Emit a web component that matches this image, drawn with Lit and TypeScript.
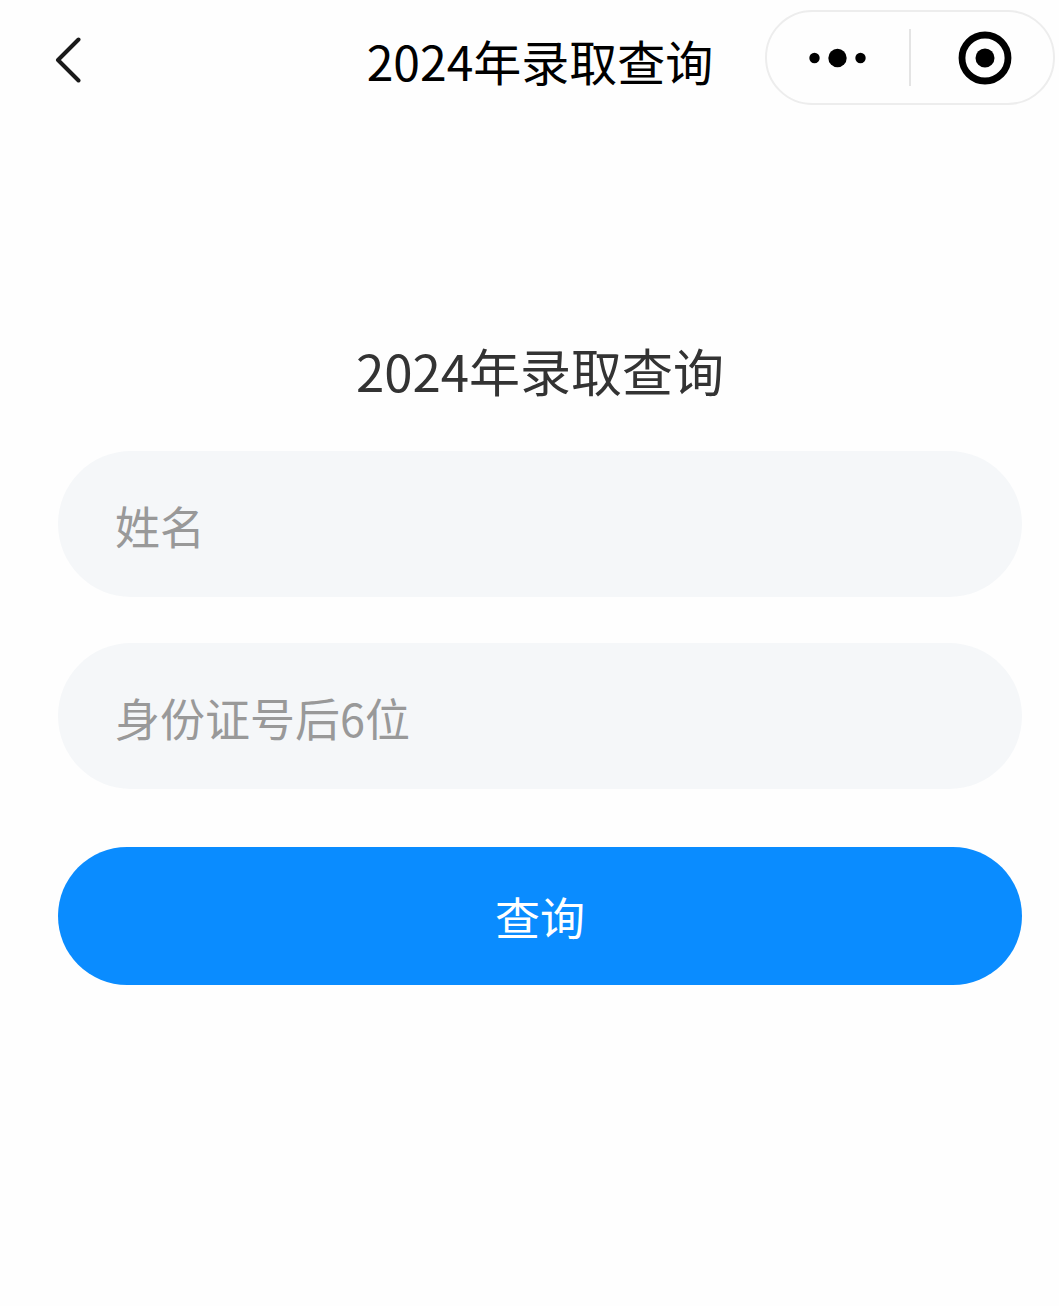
import { LitElement, html, css } from "lit";
import { customElement, state } from "lit/decorators.js";

@customElement("nav-header")
class NavHeader extends LitElement {
  static styles = css`
    :host {
      display: block;
    }
    .bar {
      display: grid;
      grid-template-columns: 1fr auto 1fr;
      align-items: center;
      padding: 10px 4px 0 25px;
    }
    .title {
      margin: 0;
      padding-top: 4px;
      font-size: 48px;
      line-height: 72px;
      font-weight: 400;
      color: #000;
      white-space: nowrap;
    }
    button {
      appearance: none;
      margin: 0;
      padding: 0;
      border: 0;
      background: none;
      color: inherit;
      cursor: pointer;
    }
    svg {
      display: block;
    }
    .back {
      justify-self: start;
      padding: 4px 28px 0;
      color: #1a1a1a;
    }
    .capsule {
      justify-self: end;
      display: flex;
      align-items: center;
      box-sizing: border-box;
      height: 95px;
      border: 2px solid #ededed;
      border-radius: 48px;
      color: #000;
    }
    .capsule button {
      display: flex;
      align-items: center;
      justify-content: center;
      width: 142px;
      height: 91px;
    }
    .capsule .close {
      padding-left: 6px;
      box-sizing: border-box;
    }
    .divider {
      width: 2px;
      height: 57px;
      background: #e4e4e4;
    }
  `;

  render() {
    return html`
      <header class="bar">
        <button class="back" type="button" aria-label="返回">
          <svg width="28" height="48" viewBox="0 0 28 48" fill="none" stroke="currentColor" stroke-width="4" stroke-linecap="round" stroke-linejoin="round">
            <path d="M25.500 3.500L5 24L25.500 44.500" />
          </svg>
        </button>
        <h1 class="title">2024年录取查询</h1>
        <div class="capsule">
          <button type="button" aria-label="更多">
            <svg width="58" height="20" viewBox="0 0 58 20" fill="currentColor">
              <circle cx="5.500" cy="10" r="5.200" />
              <circle cx="28.500" cy="10" r="9.200" />
              <circle cx="51.500" cy="10" r="5.200" />
            </svg>
          </button>
          <span class="divider"></span>
          <button class="close" type="button" aria-label="关闭">
            <svg width="54" height="54" viewBox="0 0 54 54">
              <circle cx="27" cy="27" r="23" fill="none" stroke="currentColor" stroke-width="6.800" />
              <circle cx="27" cy="27" r="9.500" fill="currentColor" />
            </svg>
          </button>
        </div>
      </header>
    `;
  }
}

@customElement("query-form")
class QueryForm extends LitElement {
  @state() private name = "";
  @state() private idTail = "";

  static styles = css`
    :host {
      display: block;
    }
    .form {
      display: flex;
      flex-direction: column;
      padding: 226px 37px 48px 58px;
    }
    .heading {
      margin: 0 0 42px;
      font-size: 51px;
      line-height: 78px;
      font-weight: 400;
      text-align: center;
      color: #333;
    }
    .fields {
      display: flex;
      flex-direction: column;
      gap: 46px;
    }
    .field {
      display: block;
    }
    input,
    .submit {
      display: block;
      box-sizing: border-box;
      width: 100%;
      margin: 0;
      border: 0;
      border-radius: 73px;
      font: inherit;
      font-size: 45px;
      line-height: 66px;
    }
    input {
      padding: 42px 57px 38px;
      background: #f5f7f9;
      color: #333;
      outline: none;
    }
    input::placeholder {
      color: #999;
      opacity: 1;
    }
    .submit {
      margin-top: 58px;
      padding: 37px 57px 35px;
      background: #0a8cff;
      color: #fff;
      cursor: pointer;
    }
  `;

  render() {
    return html`
      <form class="form" @submit=${(e: Event) => e.preventDefault()}>
        <h2 class="heading">2024年录取查询</h2>
        <div class="fields">
          <label class="field">
            <input
              type="text"
              name="name"
              aria-label="姓名"
              placeholder="姓名"
              .value=${this.name}
              @input=${(e: Event) => (this.name = (e.target as HTMLInputElement).value)}
            />
          </label>
          <label class="field">
            <input
              type="text"
              name="idTail"
              maxlength="6"
              aria-label="身份证号后6位"
              placeholder="身份证号后6位"
              .value=${this.idTail}
              @input=${(e: Event) => (this.idTail = (e.target as HTMLInputElement).value)}
            />
          </label>
        </div>
        <button class="submit" type="submit">查询</button>
      </form>
    `;
  }
}

@customElement("app-root")
class AppRoot extends LitElement {
  static styles = css`
    :host {
      display: block;
      min-height: 100vh;
      background: #fefefe;
      font-family: "Noto Sans CJK SC", "Noto Sans", sans-serif;
    }
  `;

  render() {
    return html`
      <nav-header></nav-header>
      <main><query-form></query-form></main>
    `;
  }
}
